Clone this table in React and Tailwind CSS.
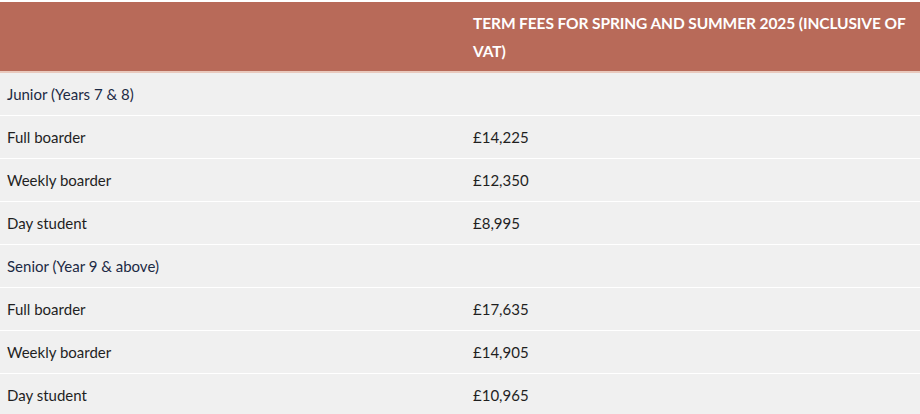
const rows = [
  { label: 'Junior (Years 7 & 8)', heading: true },
  { label: 'Full boarder', fee: '£14,225' },
  { label: 'Weekly boarder', fee: '£12,350' },
  { label: 'Day student', fee: '£8,995' },
  { label: 'Senior (Year 9 & above)', heading: true },
  { label: 'Full boarder', fee: '£17,635' },
  { label: 'Weekly boarder', fee: '£14,905' },
  { label: 'Day student', fee: '£10,965' },
]

export default function App() {
  return (
    <div className="w-[920px] h-[414px] overflow-hidden bg-white pt-[2px] font-['Lato',sans-serif] text-[15px]">
      {/* header */}
      <div className="grid grid-cols-[466px_1fr] bg-[#b86a59] border-b-2 border-[#e9c9bd]">
        <div />
        <div className="pt-[7px] pb-[6px] pl-[7px] font-bold text-white uppercase leading-[28px] text-[15.5px] tracking-[-0.1px]">
          Term fees for Spring and Summer 2025 (inclusive of VAT)
        </div>
      </div>

      {/* rows */}
      {rows.map((r, i) => (
        <div
          key={i}
          className="grid grid-cols-[466px_1fr] h-[43px] items-center bg-[#f0f0f0] border-b border-white"
        >
          <div className={`pl-[7px] ${r.heading ? 'text-[#1c2a44]' : 'text-[#1f1f1f]'}`}>{r.label}</div>
          <div className="pl-[7px] text-[#1f1f1f]">{r.fee}</div>
        </div>
      ))}
    </div>
  )
}
